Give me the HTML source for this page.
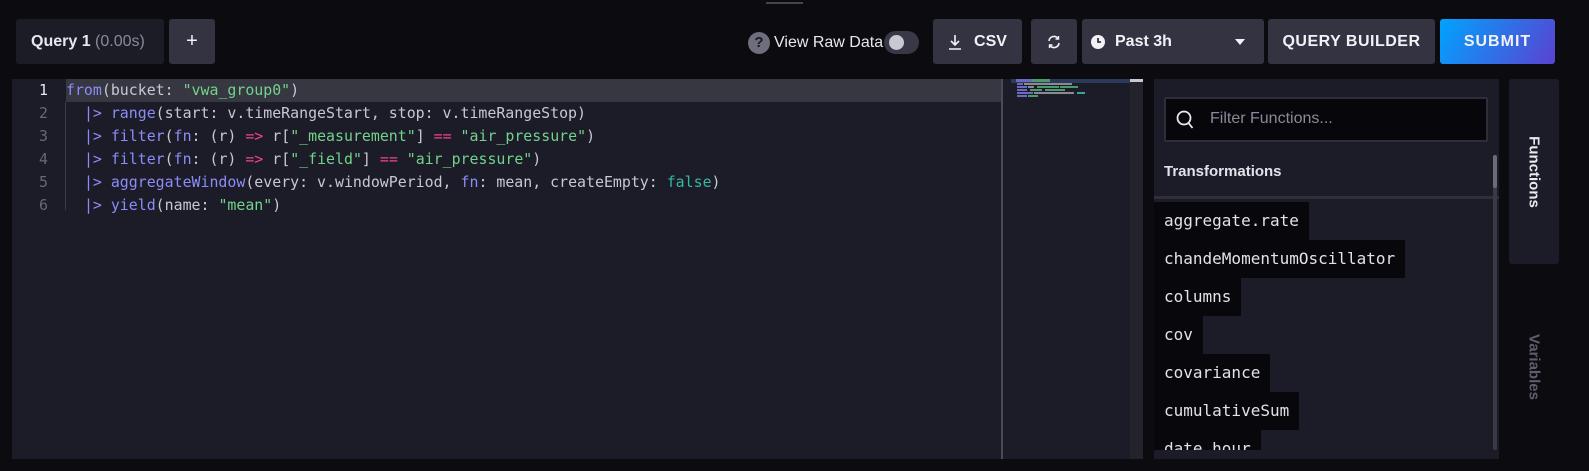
<!DOCTYPE html>
<html><head><meta charset="utf-8"><style>
*{margin:0;padding:0;box-sizing:border-box}
body{width:1589px;height:471px;background:#0b0b10;position:relative;overflow:hidden;font-family:"Liberation Sans",sans-serif;color:#e8e8ee}
.abs{position:absolute}
.btn{position:absolute;top:19px;height:45px;background:#333341;border-radius:3px;display:flex;align-items:center;justify-content:center;font-weight:bold;font-size:16px;color:#f2f2f6}
.code{position:absolute;left:66px;top:79px;font-family:"DejaVu Sans Mono","Liberation Mono",monospace;font-size:14.9px;line-height:22.9px;color:#c8c8d4;white-space:pre}
.ln{position:absolute;left:12px;width:36px;text-align:right;top:79px;font-family:"DejaVu Sans Mono",monospace;font-size:14.9px;line-height:22.9px;color:#686876;white-space:pre}
.k{color:#8c8cf8}.s{color:#72d38a}.o{color:#f0458a}.t{color:#33b8a4}
.item{position:absolute;left:1154px;height:38px;background:#07070c;font-family:"DejaVu Sans Mono",monospace;font-size:16px;color:#e2e2e8;padding:0 10px;line-height:38px}
.mm{position:absolute;height:2px}
</style></head><body>
<div class="abs" style="left:766px;top:2px;width:37px;height:2px;background:#44444f"></div>

<div class="abs" style="left:16px;top:19px;width:148px;height:45px;background:#1c1c27;border-radius:3px;font-size:16px;font-weight:bold;line-height:45px;padding-left:15px;color:#e8e8ee">Query 1 <span style="color:#8a8a96;font-weight:normal">(0.00s)</span></div>
<div class="btn" style="left:169px;width:46px;font-size:20px;font-weight:normal">+</div>

<div class="abs" style="left:748px;top:32px;width:22px;height:22px;border-radius:50%;background:#6e6e7c;color:#1a1a22;font-weight:bold;font-size:15px;text-align:center;line-height:22px">?</div>
<div class="abs" style="left:774px;top:32px;font-size:16px;line-height:22px;color:#e8e8ee">View Raw Data</div>
<div class="abs" style="left:884px;top:31px;width:35px;height:23px;border-radius:12px;background:#383846"></div>
<div class="abs" style="left:889px;top:35px;width:15px;height:15px;border-radius:50%;background:#c8c8d2"></div>

<div class="btn" style="left:933px;width:89px"><svg width="14" height="16" viewBox="0 0 14 16" style="margin-right:12px"><path d="M7 1v10M3 7l4 4 4-4M1 15h12" stroke="#f2f2f6" stroke-width="1.6" fill="none"/></svg>CSV</div>
<div class="btn" style="left:1031px;width:46px"><svg width="14" height="14" viewBox="0 0 14 14"><path d="M2 6A5 5 0 0 1 11 3.5M12 8A5 5 0 0 1 3 10.5" stroke="#f2f2f6" stroke-width="1.6" fill="none"/><path d="M11.5 1v3h-3M2.5 13v-3h3" stroke="#f2f2f6" stroke-width="1.4" fill="none"/></svg></div>
<div class="btn" style="left:1082px;width:182px;justify-content:flex-start;padding-left:9px"><svg width="14" height="14" viewBox="0 0 14 14" style="margin-right:10px"><circle cx="7" cy="7" r="7" fill="#f2f2f6"/><path d="M7 3v4h3" stroke="#333341" stroke-width="1.8" fill="none"/></svg>Past 3h<span style="position:absolute;right:19px;top:20px;border-left:5px solid transparent;border-right:5px solid transparent;border-top:6px solid #f2f2f6"></span></div>
<div class="btn" style="left:1268px;width:167px;letter-spacing:0.5px">QUERY BUILDER</div>
<div class="btn" style="left:1440px;width:115px;background:linear-gradient(120deg,#00a3ff,#5a42d0);letter-spacing:1px">SUBMIT</div>

<!-- editor -->
<div class="abs" style="left:12px;top:79px;width:1131px;height:380px;background:#1c1c28"></div>
<div class="abs" style="left:66px;top:79px;width:936px;height:23px;background:#373742"></div>
<div class="abs" style="left:65px;top:102px;width:1px;height:108px;background:#3a3a46"></div>
<div class="ln"><span style="color:#e8e8ee">1</span>
2
3
4
5
6</div>
<div class="code"><span class="k">from</span>(bucket: <span class="s">"vwa_group0"</span>)
  <span class="k">|&gt;</span> <span class="k">range</span>(start: v.timeRangeStart, stop: v.timeRangeStop)
  <span class="k">|&gt;</span> <span class="k">filter</span>(<span class="k">fn</span>: (r) <span class="o">=&gt;</span> r[<span class="s">"_measurement"</span>] <span class="o">==</span> <span class="s">"air_pressure"</span>)
  <span class="k">|&gt;</span> <span class="k">filter</span>(<span class="k">fn</span>: (r) <span class="o">=&gt;</span> r[<span class="s">"_field"</span>] <span class="o">==</span> <span class="s">"air_pressure"</span>)
  <span class="k">|&gt;</span> <span class="k">aggregateWindow</span>(every: v.windowPeriod, <span class="k">fn</span>: mean, createEmpty: <span class="t">false</span>)
  <span class="k">|&gt;</span> <span class="k">yield</span>(name: <span class="s">"mean"</span>)</div>
<!-- minimap -->
<div class="abs" style="left:1001px;top:79px;width:2px;height:380px;background:#4a4a56"></div>
<div class="abs" style="left:1130px;top:79px;width:13px;height:380px;background:#23232b"></div>
<div class="abs" style="left:1130px;top:79px;width:13px;height:3px;background:#c8c8d0"></div>
<div class="abs" style="left:1011px;top:79px;width:119px;height:4px;background:#2c3a5a"></div>
<div class="mm" style="left:1016px;top:79px;width:16px;background:#6a6ac0;height:3px"></div>
<div class="mm" style="left:1032px;top:79px;width:18px;background:#4f9a6a;height:3px"></div>
<div class="mm" style="left:1017px;top:83px;width:6px;background:#6a6ac0"></div>
<div class="mm" style="left:1024px;top:83px;width:48px;background:#8a8a94"></div>
<div class="mm" style="left:1017px;top:86px;width:10px;background:#6a6ac0"></div>
<div class="mm" style="left:1028px;top:86px;width:6px;background:#8a8a94"></div>
<div class="mm" style="left:1037px;top:86px;width:22px;background:#4f9a6a"></div>
<div class="mm" style="left:1060px;top:86px;width:18px;background:#4f9a6a"></div>
<div class="mm" style="left:1017px;top:89px;width:10px;background:#6a6ac0"></div>
<div class="mm" style="left:1030px;top:89px;width:12px;background:#4f9a6a"></div>
<div class="mm" style="left:1045px;top:89px;width:20px;background:#4f9a6a"></div>
<div class="mm" style="left:1017px;top:92px;width:16px;background:#6a6ac0"></div>
<div class="mm" style="left:1034px;top:92px;width:40px;background:#8a8a94"></div>
<div class="mm" style="left:1077px;top:92px;width:8px;background:#33a890"></div>
<div class="mm" style="left:1017px;top:95px;width:10px;background:#6a6ac0"></div>
<div class="mm" style="left:1028px;top:95px;width:10px;background:#4f9a6a"></div>

<!-- functions panel -->
<div class="abs" style="left:1154px;top:79px;width:345px;height:380px;background:#1c1c28"></div>
<div class="abs" style="left:1164px;top:97px;width:324px;height:45px;background:#07070b;border:2px solid #2e2e3a;border-radius:2px"></div>
<svg class="abs" style="left:1176px;top:110px" width="18" height="20" viewBox="0 0 18 20"><circle cx="8" cy="8" r="6.5" stroke="#e8e8ee" stroke-width="1.8" fill="none"/><path d="M12.5 13l4 5" stroke="#e8e8ee" stroke-width="1.8"/></svg>
<div class="abs" style="left:1210px;top:108px;font-size:16px;line-height:22px;color:#8a8a98">Filter Functions...</div>
<div class="abs" style="left:1164px;top:161px;font-size:15px;font-weight:bold;line-height:22px;color:#e2e2ea">Transformations</div>
<div class="abs" style="left:1154px;top:196px;width:345px;height:3px;background:#30303c"></div>
<div class="abs" style="left:1154px;top:202px;width:335px;height:248px;overflow:hidden">
<div class="item" style="left:0;top:0">aggregate.rate</div>
<div class="item" style="left:0;top:38px">chandeMomentumOscillator</div>
<div class="item" style="left:0;top:76px">columns</div>
<div class="item" style="left:0;top:114px">cov</div>
<div class="item" style="left:0;top:152px">covariance</div>
<div class="item" style="left:0;top:190px">cumulativeSum</div>
<div class="item" style="left:0;top:228px">date.hour</div>
</div>
<div class="abs" style="left:1493px;top:155px;width:4px;height:295px;background:#3a3a46;border-radius:2px"></div>
<div class="abs" style="left:1493px;top:155px;width:4px;height:33px;background:#6a6a78;border-radius:2px"></div>

<!-- side tabs -->
<div class="abs" style="left:1509px;top:79px;width:50px;height:185px;background:#1c1c28;border-radius:3px"></div>
<div class="abs" style="left:1534px;top:172px;transform:translate(-50%,-50%) rotate(90deg);font-size:15px;font-weight:bold;color:#e8e8ee;white-space:nowrap">Functions</div>
<div class="abs" style="left:1534px;top:367px;transform:translate(-50%,-50%) rotate(90deg);font-size:15px;font-weight:bold;color:#5e5e6c;white-space:nowrap">Variables</div>
</body></html>
